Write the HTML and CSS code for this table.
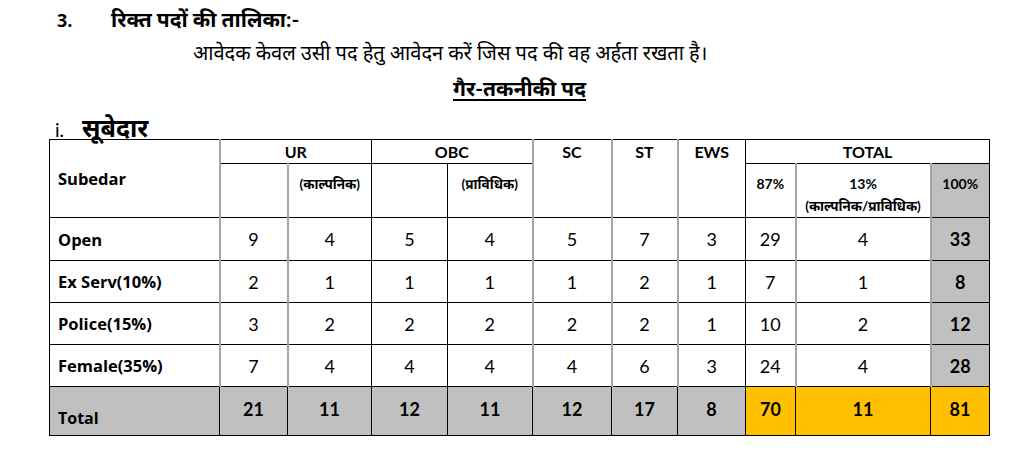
FILE: index.html
```html
<!DOCTYPE html>
<html lang="hi">
<head>
<meta charset="utf-8">
<title>रिक्त पदों की तालिका</title>
<link rel="stylesheet" href="styles.css">
</head>
<body>
<div class="page">
  <div class="heading">
    <span class="num">3.</span>
    <span class="htext">रिक्त पदों की तालिका:-</span>
  </div>
  <p class="note">आवेदक केवल उसी पद हेतु आवेदन करें जिस पद की वह अर्हता रखता है।</p>
  <p class="sub"><span>गैर-तकनीकी पद</span></p>
  <div class="post"><span class="roman">i.</span><span class="pname">सूबेदार</span></div>
  <table class="vac">
    <colgroup>
      <col class="c0"><col class="c1"><col class="c2"><col class="c3"><col class="c4"><col class="c5"><col class="c6"><col class="c7"><col class="c8"><col class="c9"><col class="c10">
    </colgroup>
    <tr class="h1">
      <th rowspan="2" class="lab gr">Subedar</th>
      <th colspan="2" class="bk">UR</th>
      <th colspan="2" class="gr">OBC</th>
      <th rowspan="2" class="top gr">SC</th>
      <th rowspan="2" class="top gr">ST</th>
      <th rowspan="2" class="top bk">EWS</th>
      <th colspan="3">TOTAL</th>
    </tr>
    <tr class="h2">
      <th class="gr"></th>
      <th class="bk small">(काल्पनिक)</th>
      <th class="bk"></th>
      <th class="gr small">(प्राविधिक)</th>
      <th class="gr pct">87%</th>
      <th class="gr pct">13%<br><span class="small">(काल्पनिक/प्राविधिक)</span></th>
      <th class="grey pct">100%</th>
    </tr>
    <tr class="r1">
      <td class="lab gr">Open</td><td class="gr">9</td><td class="bk">4</td><td class="bk">5</td><td class="gr">4</td><td class="gr">5</td><td class="gr">7</td><td class="bk">3</td><td class="gr">29</td><td class="gr">4</td><td class="grey b">33</td>
    </tr>
    <tr class="r2">
      <td class="lab gr">Ex Serv(10%)</td><td class="gr">2</td><td class="bk">1</td><td class="bk">1</td><td class="gr">1</td><td class="gr">1</td><td class="gr">2</td><td class="bk">1</td><td class="gr">7</td><td class="gr">1</td><td class="grey b">8</td>
    </tr>
    <tr class="r2">
      <td class="lab gr">Police(15%)</td><td class="gr">3</td><td class="bk">2</td><td class="bk">2</td><td class="gr">2</td><td class="gr">2</td><td class="gr">2</td><td class="bk">1</td><td class="gr">10</td><td class="gr">2</td><td class="grey b">12</td>
    </tr>
    <tr class="r2">
      <td class="lab gr">Female(35%)</td><td class="gr">7</td><td class="bk">4</td><td class="bk">4</td><td class="gr">4</td><td class="gr">4</td><td class="gr">6</td><td class="bk">3</td><td class="gr">24</td><td class="gr">4</td><td class="grey b">28</td>
    </tr>
    <tr class="tot">
      <td class="lab tl">Total</td><td>21</td><td>11</td><td>12</td><td>11</td><td>12</td><td>17</td><td>8</td><td class="yel">70</td><td class="yel">11</td><td class="yel">81</td>
    </tr>
  </table>
</div>
</body>
</html>
```

FILE: styles.css
```css
html, body {
  margin: 0;
  padding: 0;
  background: #ffffff;
}
body {
  font-family: Lato, "Noto Sans Devanagari", "Noto Sans", sans-serif;
  color: #000;
}
.page {
  padding: 4px 0 0 49px;
}
.heading {
  display: flex;
  align-items: baseline;
  font-weight: bold;
  height: 30px;
  line-height: 30px;
  padding-left: 8px;
}
.num {
  font-family: "Open Sans", sans-serif;
  font-size: 18px;
  font-weight: bold;
  width: 54px;
}
.htext {
  font-size: 21px;
}
.note {
  margin: 0;
  padding-left: 144px;
  font-size: 20px;
  height: 37px;
  line-height: 37px;
}
.sub {
  margin: 0;
  padding-left: 404px;
  font-size: 21px;
  font-weight: bold;
  height: 34px;
  line-height: 34px;
}
.sub span {
  text-decoration: underline;
  text-decoration-thickness: 1.5px;
  text-underline-offset: 3px;
}
.post {
  height: 24px;
  padding-top: 10px;
  display: flex;
  align-items: baseline;
  padding-left: 6px;
  line-height: 24px;
}
.roman {
  font-size: 19px;
  font-weight: normal;
  width: 27px;
}
.pname {
  font-size: 25px;
  font-weight: bold;
}
.vac {
  border-collapse: collapse;
  width: 940px;
  table-layout: fixed;
  border: 1.5px solid #000;
}
.c0 { width: 170px; }
.c1 { width: 68px; }
.c2 { width: 84px; }
.c3 { width: 76px; }
.c4 { width: 85px; }
.c5 { width: 79px; }
.c6 { width: 66px; }
.c7 { width: 68px; }
.c8 { width: 50px; }
.c9 { width: 135px; }
.c10 { width: 59px; }
.vac th, .vac td {
  padding: 0;
  text-align: center;
  border: 1.5px solid #000;
}
.vac th {
  font-weight: bold;
}
.vac th.gr, .vac td.gr {
  border-right: 2px solid #a6a6a6;
}
.vac th.bk, .vac td.bk {
  border-right: 1.5px solid #000;
}
.h1 { height: 24px; }
.h1 th { font-size: 16px; vertical-align: middle; }
.h1 th.top { vertical-align: top; padding-top: 2px; }
.h2 { height: 54px; }
.h2 th { vertical-align: top; padding-top: 9px; font-size: 14px; line-height: 22px; }
.vac th.small, .vac .small { font-size: 13.5px; }
.vac th.pct { font-size: 14px; }
.vac .lab {
  font-family: "Open Sans", sans-serif;
  text-align: left;
  padding-left: 8px;
  font-weight: bold;
  font-size: 16.5px;
  vertical-align: middle;
}
.vac td { font-size: 18px; }
.r1 { height: 43px; }
.r2 { height: 42px; }
.grey { background: #c0c0c0; }
.b { font-weight: bold; }
.tot { height: 49px; }
.tot td {
  background: #c0c0c0;
  font-weight: bold;
  padding-bottom: 4px;
}
.vac .tot td.tl {
  vertical-align: bottom;
  padding-bottom: 6px;
  font-size: 16px;
}
.tot td.yel { background: #ffc000; }
```
